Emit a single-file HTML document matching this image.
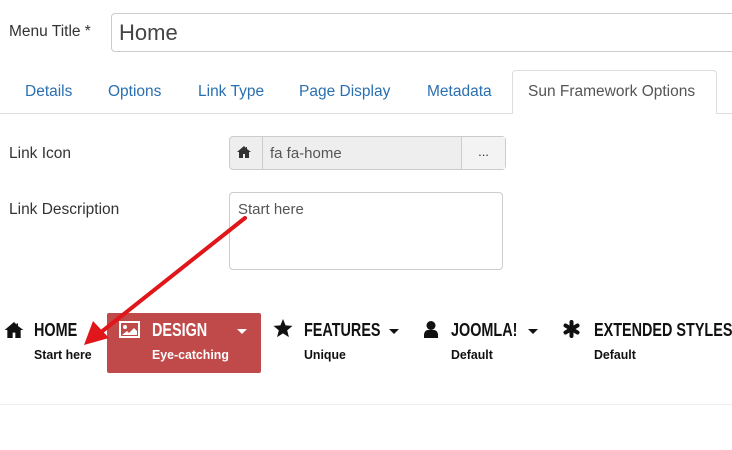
<!DOCTYPE html>
<html><head><meta charset="utf-8"><style>
*{box-sizing:border-box;margin:0;padding:0}
body{width:732px;height:450px;background:#fff;font-family:"Liberation Sans",sans-serif;position:relative;overflow:hidden;color:#333}
.a{position:absolute}
.lbl{font-size:15.5px;color:#333}
.tab{position:absolute;top:83px;font-size:15.5px;color:#2a6fb0}
.m{position:absolute;font-weight:bold;color:#111;white-space:nowrap}
.m .t{font-size:18px;display:inline-block;transform:scaleX(0.8);transform-origin:left}
.m .s{font-size:13px;position:absolute;white-space:nowrap;transform:scaleX(0.95);transform-origin:left}
</style></head><body>
<div class="a lbl" style="left:9px;top:23px">Menu Title *</div>
<div class="a" style="left:111px;top:13px;width:640px;height:39px;border:1px solid #ccc;border-radius:4px"></div>
<div class="a" style="left:119px;top:20px;font-size:22px;color:#444">Home</div>
<div class="a" style="left:0;top:113px;width:732px;height:1px;background:#ddd"></div>
<div class="a" style="left:512px;top:70px;width:205px;height:44px;border:1px solid #ddd;border-bottom:none;border-radius:4px 4px 0 0;background:#fff"></div>
<div class="tab" style="left:25px">Details</div>
<div class="tab" style="left:108px">Options</div>
<div class="tab" style="left:198px">Link Type</div>
<div class="tab" style="left:299px">Page Display</div>
<div class="tab" style="left:427px">Metadata</div>
<div class="tab" style="left:528px;color:#555">Sun Framework Options</div>
<div class="a lbl" style="left:9px;top:145px">Link Icon</div>
<div class="a" style="left:229px;top:136px;width:277px;height:34px;border:1px solid #ccc;border-radius:4px;background:#eee"></div>
<div class="a" style="left:262px;top:137px;width:1px;height:32px;background:#ccc"></div>
<div class="a" style="left:461px;top:137px;width:44px;height:32px;border-left:1px solid #ccc;background:#f3f3f3;text-align:center;font-size:13px;line-height:30px;color:#333">...</div>
<svg class="a" style="left:237px;top:146px" width="14" height="12" viewBox="0 0 14 12"><path d="M7 0L0 6h2v6h4V8h2v4h4V6h2L10 3V1H9v1z" fill="#333"/></svg>
<div class="a" style="left:270px;top:145px;font-size:15px;color:#555">fa fa-home</div>
<div class="a lbl" style="left:9px;top:201px">Link Description</div>
<div class="a" style="left:229px;top:192px;width:274px;height:78px;border:1px solid #ccc;border-radius:4px"></div>
<div class="a" style="left:238px;top:201px;font-size:15px;color:#555">Start here</div>
<div class="a" style="left:107px;top:313px;width:154px;height:60px;background:#c0494a;border-radius:2px"></div>
<svg class="a" style="left:4px;top:322px" width="20" height="16" viewBox="0 0 14 12"><path d="M7 0L0 6h2v6h4V8h2v4h4V6h2L10 3V1H9v1z" fill="#111"/></svg>
<div class="m" style="left:34px;top:320px"><span class="t">HOME</span><div class="s" style="left:0;top:27px">Start here</div></div>
<svg class="a" style="left:119px;top:321px" width="21" height="17" viewBox="0 0 21 17"><rect x="1" y="1" width="19" height="15" fill="none" stroke="#fff" stroke-width="2"/><circle cx="6" cy="6" r="2" fill="#fff"/><path d="M3 14l5-4 2 2 5-5 3 3v4z" fill="#fff"/></svg>
<div class="m" style="left:152px;top:320px;color:#fff"><span class="t">DESIGN</span><div class="s" style="left:0;top:27px">Eye-catching</div></div>
<div class="a" style="left:237px;top:329px;border:5px solid transparent;border-top:5px solid #fff"></div>
<svg class="a" style="left:273px;top:319px" width="20" height="19" viewBox="0 0 20 19"><path d="M10 0l2.6 6.4 6.9.5-5.3 4.5 1.7 6.7L10 14.4l-5.9 3.7 1.7-6.7L.5 6.9l6.9-.5z" fill="#111"/></svg>
<div class="m" style="left:304px;top:320px"><span class="t">FEATURES</span><div class="s" style="left:0;top:27px">Unique</div></div>
<div class="a" style="left:389px;top:329px;border:5px solid transparent;border-top:5px solid #111"></div>
<svg class="a" style="left:424px;top:321px" width="14" height="17" viewBox="0 0 14 17"><circle cx="7" cy="4.5" r="4.5" fill="#111"/><path d="M0 17v-3c0-3 2-5 4-5h6c2 0 4 2 4 5v3z" fill="#111"/></svg>
<div class="m" style="left:451px;top:320px"><span class="t">JOOMLA!</span><div class="s" style="left:0;top:27px">Default</div></div>
<div class="a" style="left:528px;top:329px;border:5px solid transparent;border-top:5px solid #111"></div>
<svg class="a" style="left:563px;top:320px" width="17" height="18" viewBox="0 0 17 18"><g stroke="#111" stroke-width="4" stroke-linecap="round"><line x1="8.5" y1="2" x2="8.5" y2="16"/><line x1="2.5" y1="5.5" x2="14.5" y2="12.5"/><line x1="2.5" y1="12.5" x2="14.5" y2="5.5"/></g></svg>
<div class="m" style="left:594px;top:320px"><span class="t">EXTENDED STYLES</span><div class="s" style="left:0;top:27px">Default</div></div>
<div class="a" style="left:0;top:404px;width:732px;height:1px;background:#eee"></div>
<svg class="a" style="left:0;top:0" width="732" height="450"><line x1="245" y1="218" x2="100" y2="333" stroke="#e0161a" stroke-width="4" stroke-linecap="round"/><path d="M84 345L93 321L109 338z" fill="#e0161a"/></svg>
</body></html>
